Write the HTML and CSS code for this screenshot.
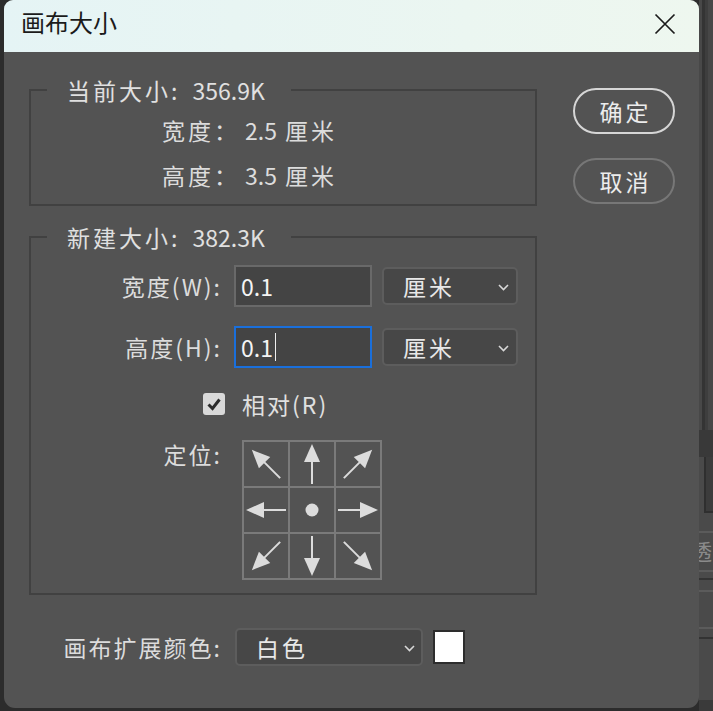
FILE: index.html
```html
<!DOCTYPE html>
<html lang="zh-CN">
<head>
<meta charset="utf-8">
<title>画布大小</title>
<link rel="stylesheet" href="styles.css">
</head>
<body>
<div class="edge-left"></div>
<div class="dialog">
  <div class="titlebar">
    <div class="title">画布大小</div>
    <svg class="close" width="22" height="22" viewBox="0 0 22 22"><path d="M1.5 1.5 L20.5 20.5 M20.5 1.5 L1.5 20.5" stroke="#1b1b1b" stroke-width="1.7" fill="none"/></svg>
  </div>
  <div class="content">
    <div class="main">
      <fieldset class="group">
        <legend>当前大小: <span class="num size">356.9K</span></legend>
        <div class="info">
          <div class="info-row"><span class="k">宽度：</span><span class="v"><span class="num">2.5</span> 厘米</span></div>
          <div class="info-row"><span class="k">高度：</span><span class="v"><span class="num">3.5</span> 厘米</span></div>
        </div>
      </fieldset>
      <fieldset class="group group-new">
        <legend>新建大小: <span class="num size">382.3K</span></legend>
        <div class="form">
          <div class="label">宽度(W):</div>
          <div class="pair">
            <div class="input"><span class="num">0.1</span></div>
            <div class="select"><span>厘米</span><svg width="11" height="7" viewBox="0 0 11 7"><path d="M1 1 L5.5 5.5 L10 1" stroke="#d8d8d8" stroke-width="1.6" fill="none"/></svg></div>
          </div>
          <div class="label">高度(H):</div>
          <div class="pair">
            <div class="input focus"><span class="num">0.1</span><span class="caret"></span></div>
            <div class="select"><span>厘米</span><svg width="11" height="7" viewBox="0 0 11 7"><path d="M1 1 L5.5 5.5 L10 1" stroke="#d8d8d8" stroke-width="1.6" fill="none"/></svg></div>
          </div>
        </div>
        <div class="check-row">
          <svg class="checkbox" width="22" height="22" viewBox="0 0 22 22"><rect x="0" y="0" width="22" height="22" rx="3" fill="#d9d9d9"/><path d="M5.5 11.5 L9.5 15.5 L16.5 6.5" stroke="#2c2c2c" stroke-width="3" fill="none"/></svg>
          <span>相对(R)</span>
        </div>
        <div class="anchor-row">
          <div class="label anchor-label">定位:</div>
          <svg class="anchor-grid" width="140" height="140" viewBox="0 0 140 140">
            <defs>
              <g id="arr">
                <path d="M0 -20 L8 -2 L-8 -2 Z" fill="#dcdcdc"/>
                <rect x="-1" y="-3" width="2" height="23" fill="#dcdcdc"/>
              </g>
            </defs>
            <g stroke="#7a7a7a" stroke-width="2" fill="none">
              <rect x="1" y="1" width="138" height="138"/>
              <line x1="47" y1="0" x2="47" y2="140"/>
              <line x1="93" y1="0" x2="93" y2="140"/>
              <line x1="0" y1="47" x2="140" y2="47"/>
              <line x1="0" y1="93" x2="140" y2="93"/>
            </g>
            <use href="#arr" transform="translate(24 24) rotate(-45)"/>
            <use href="#arr" transform="translate(70 24)"/>
            <use href="#arr" transform="translate(116 24) rotate(45)"/>
            <use href="#arr" transform="translate(24 70) rotate(-90)"/>
            <circle cx="70" cy="70" r="6.5" fill="#dcdcdc"/>
            <use href="#arr" transform="translate(116 70) rotate(90)"/>
            <use href="#arr" transform="translate(24 116) rotate(-135)"/>
            <use href="#arr" transform="translate(70 116) rotate(180)"/>
            <use href="#arr" transform="translate(116 116) rotate(135)"/>
          </svg>
        </div>
      </fieldset>
      <div class="bottom-row">
        <div class="label bottom-label">画布扩展颜色:</div>
        <div class="select wide"><span>白色</span><svg width="11" height="7" viewBox="0 0 11 7"><path d="M1 1 L5.5 5.5 L10 1" stroke="#d8d8d8" stroke-width="1.6" fill="none"/></svg></div>
        <div class="swatch"></div>
      </div>
    </div>
    <div class="actions">
      <div class="btn primary">确定</div>
      <div class="btn secondary">取消</div>
    </div>
  </div>
</div>
<div class="bg-right">
  <div class="seg-lines"></div>
  <div class="seg-dark"></div>
  <div class="seg-box"><div class="inner-box"></div></div>
  <div class="seg-lower"><span class="ghost">透</span></div>
</div>
</body>
</html>
```
FILE: styles.css
```css
html, body {
  margin: 0;
  padding: 0;
}
body {
  width: 713px;
  height: 711px;
  overflow: hidden;
  background: #2c2c2c;
  display: flex;
  font-family: "Noto Sans CJK SC", "Noto Sans", sans-serif;
}
.edge-left {
  width: 4px;
  flex: none;
}
.dialog {
  width: 695px;
  height: 708px;
  flex: none;
  background: #535353;
  border-radius: 9px 9px 11px 11px;
  display: flex;
  flex-direction: column;
  overflow: hidden;
}
.titlebar {
  height: 52px;
  flex: none;
  box-sizing: border-box;
  background: linear-gradient(90deg, #e5f4f5, #eef7ef);
  display: flex;
  justify-content: space-between;
  align-items: flex-start;
  padding: 0 23px 0 17px;
}
.title {
  font-size: 24px;
  line-height: 44px;
  color: #1b1b1b;
}
.close {
  margin-top: 13px;
}
.content {
  flex: 1;
  display: grid;
  grid-template-columns: 508px 102px;
  column-gap: 36px;
  align-items: start;
  padding: 24px 24px 0 25px;
  color: #dcdcdc;
  font-size: 23px;
  letter-spacing: 3px;
}
.num {
  letter-spacing: 0;
}
.num.size {
  margin-left: 4px;
}
.group {
  border: 2px solid #414141;
  margin: 0;
  padding: 0;
  min-width: 0;
}
.group legend {
  margin-left: 16px;
  padding: 0 26px 0 20px;
  font-size: 23px;
  line-height: 28px;
  color: #e0e0e0;
}
.group-new {
  margin-top: 17px;
  padding-bottom: 13px;
}
.info {
  padding: 4px 0 6px;
}
.info-row {
  display: flex;
  padding-left: 131px;
  line-height: 45px;
}
.k {
  width: 83px;
}
.form {
  display: grid;
  grid-template-columns: 191px auto;
  column-gap: 12px;
  row-gap: 19px;
  align-items: center;
  margin-top: 14px;
}
.label {
  text-align: right;
  letter-spacing: 2px;
  line-height: 28px;
  white-space: nowrap;
}
.pair {
  display: flex;
  align-items: center;
  gap: 10px;
}
.input {
  width: 138px;
  height: 42px;
  box-sizing: border-box;
  border: 2px solid #696969;
  background: #444444;
  padding-left: 5px;
  color: #f4f4f4;
  display: flex;
  align-items: center;
  line-height: 30px;
}
.input.focus {
  border-color: #1a6fdb;
}
.caret {
  width: 1px;
  height: 28px;
  background: #eeeeee;
  margin-left: 2px;
}
.select {
  width: 136px;
  height: 38px;
  box-sizing: border-box;
  border: 2px solid #5d5d5d;
  border-radius: 5px;
  background: #474747;
  display: flex;
  align-items: center;
  justify-content: space-between;
  padding: 0 7px 0 19px;
  color: #e8e8e8;
  line-height: 30px;
}
.select svg {
  margin-top: 3px;
}
.select.wide {
  width: 188px;
  padding-right: 6px;
}
.check-row {
  display: flex;
  align-items: center;
  gap: 17px;
  padding-left: 172px;
  margin-top: 25px;
  height: 22px;
  letter-spacing: 2px;
  color: #e0e0e0;
}
.checkbox {
  flex: none;
}
.anchor-row {
  display: grid;
  grid-template-columns: 191px auto;
  column-gap: 12px;
  margin-top: 25px;
  align-items: start;
}
.anchor-label {
  line-height: 28px;
}
.anchor-grid {
  display: block;
  margin-left: 8px;
}
.bottom-row {
  display: flex;
  align-items: center;
  margin-top: 33px;
}
.bottom-label {
  width: 193px;
  flex: none;
  margin-right: 13px;
}
.swatch {
  width: 32px;
  height: 34px;
  box-sizing: border-box;
  border: 2px solid #2d2d2d;
  background: #ffffff;
  margin-left: 10px;
}
.actions {
  display: flex;
  flex-direction: column;
  gap: 24px;
  padding-top: 12px;
}
.btn {
  height: 46px;
  box-sizing: border-box;
  border-radius: 23px;
  border: 2px solid #d6d6d6;
  display: flex;
  align-items: center;
  justify-content: center;
  padding-left: 3px;
  color: #ececec;
  line-height: 30px;
}
.btn.secondary {
  border-color: #777777;
}
.bg-right {
  flex: 1;
  display: flex;
  flex-direction: column;
  overflow: hidden;
}
.seg-lines {
  height: 430px;
  flex: none;
  background: linear-gradient(90deg, #484848 0 3px, #343434 3px 6px, #3e3e3e 6px 9px, #474747 9px);
}
.seg-dark {
  height: 27px;
  flex: none;
  background: #393939;
}
.seg-box {
  height: 56px;
  flex: none;
  background: #4a4a4a;
  display: flex;
  justify-content: flex-end;
}
.inner-box {
  width: 7px;
  height: 54px;
  background: #3c3c3c;
  border-left: 2px solid #2f2f2f;
  border-bottom: 2px solid #2f2f2f;
}
.seg-lower {
  flex: 1;
  overflow: hidden;
  background: linear-gradient(180deg,
    #4a4a4a 0 18px, #5b5b5b 18px 20px, #4a4a4a 20px 57px,
    #5b5b5b 57px 59px, #4a4a4a 59px 65px, #333333 65px 67px,
    #4a4a4a 67px 77px, #5b5b5b 77px 79px, #4a4a4a 79px 114px,
    #5b5b5b 114px 116px, #4a4a4a 116px 124px, #333333 124px 126px,
    #4a4a4a 126px 187px, #3a3a3a 187px);
}
.ghost {
  display: block;
  margin: 25px 0 0 -9px;
  font-size: 22px;
  line-height: 24px;
  color: #8a8a8a;
  white-space: nowrap;
}
```
